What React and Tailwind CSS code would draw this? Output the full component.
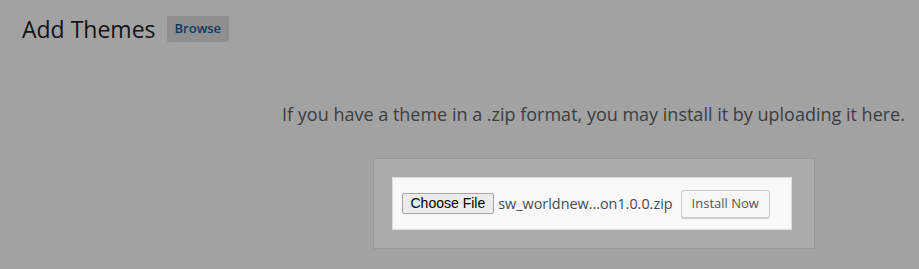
import React from "react";

const App = () => {
  return (
    <div
      className="w-[919px] h-[269px] bg-[#a2a2a2] overflow-hidden"
      style={{ fontFamily: '"Open Sans", "Liberation Sans", sans-serif' }}
    >
      <div className="flex items-center pl-[22px] pt-[14px]">
        <h1 className="text-[23px] leading-[30px] font-normal text-[#111315]">
          Add Themes
        </h1>
        <span className="ml-[11px] h-[26px] px-[8px] flex items-center bg-[#8f8f8f] rounded-[2px] text-[13px] font-semibold text-[#0b3a5e]">
          Browse
        </span>
      </div>

      <div className="ml-[270px] w-[647px] flex flex-col items-center">
        <p className="mt-[57px] text-[18px] leading-[27px] text-[#3a3e43] text-center whitespace-nowrap">
          If you have a theme in a .zip format, you may install it by uploading it here.
        </p>

        <div className="mt-[30px] w-[442px] bg-[#ababab] border border-[#999999] pl-[18px] pt-[18px] pr-[22px] pb-[18px]">
          {/* highlighted upload form */}
          <div className="w-[400px] h-[53px] bg-[#f9f9f9] border border-[#dcdcdc] flex items-center pl-[9px]">
            <button
              className="h-[21px] px-[8px] bg-[#ececec] border border-[#a6a6a6] rounded-[2px] text-[14px] leading-[19px] text-black"
              style={{ fontFamily: '"Liberation Sans", Arial, sans-serif' }}
            >
              Choose File
            </button>
            <span className="ml-[4px] text-[14.4px] text-[#444a50] whitespace-nowrap">
              sw_worldnew…on1.0.0.zip
            </span>
            <button className="ml-[8px] h-[28px] px-[10px] bg-[#f7f7f7] border border-[#cccccc] rounded-[3px] shadow-[0_1px_0_#cccccc] text-[13px] text-[#555555]">
              Install Now
            </button>
          </div>
        </div>
      </div>
    </div>
  );
};

export default App;
